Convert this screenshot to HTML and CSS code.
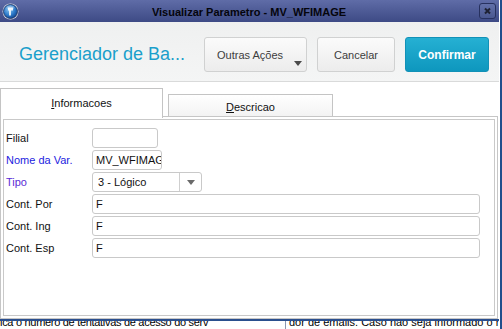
FILE: index.html
```html
<!DOCTYPE html>
<html>
<head>
    <title>Visualizar Parametro - MV_WFIMAGE</title>
    <link rel="stylesheet" href="styles.css">
</head>
<body>
    <div class="screen">
        <div class="dialog">
            <!-- Window title bar -->
            <div class="titlebar">
                <svg class="app-icon" width="17" height="17" viewBox="0 0 17 17">
                    <defs>
                        <radialGradient id="globe" cx="0.4" cy="0.35" r="0.7">
                            <stop offset="0" stop-color="#8cc8f4"/>
                            <stop offset="0.6" stop-color="#2a78c8"/>
                            <stop offset="1" stop-color="#123f86"/>
                        </radialGradient>
                    </defs>
                    <circle cx="8.5" cy="8.5" r="8" fill="#d8dde8"/>
                    <circle cx="8.5" cy="8.5" r="7" fill="url(#globe)" stroke="#1a2f5e" stroke-width="0.8"/>
                    <path d="M6 4.5 h5 v3 h-2 v5 h-2 v-5 h-1 z" fill="#ffffff" opacity="0.85"/>
                    <ellipse cx="8.5" cy="4.5" rx="4" ry="2" fill="#ffffff" opacity="0.25"/>
                </svg>
                <span class="title">Visualizar Parametro - MV_WFIMAGE</span>
                <span class="close">
                    <svg width="17" height="16" viewBox="0 0 17 16">
                        <path d="M6 5.5 L11 10.5 M11 5.5 L6 10.5" stroke="#1e2133" stroke-width="2"/>
                    </svg>
                </span>
            </div>

            <!-- Header with actions -->
            <div class="header">
                <div class="heading">Gerenciador de Ba...</div>
                <div class="actions">
                    <button class="btn btn-menu">Outras Ações<span class="caret"></span></button>
                    <button class="btn btn-cancel">Cancelar</button>
                    <button class="btn btn-primary">Confirmar</button>
                </div>
            </div>

            <!-- Folders -->
            <div class="tabs">
                <div class="tab tab-active"><u>I</u>nformacoes</div>
                <div class="tab tab-idle"><u>D</u>escricao</div>
            </div>

            <div class="panel">
                <div class="panel-inner">
                    <div class="form">
                        <div class="label">Filial</div>
                        <div class="field field-filial"></div>

                        <div class="label label-key">Nome da Var.</div>
                        <div class="field field-var">MV_WFIMAGE</div>

                        <div class="label label-type">Tipo</div>
                        <div class="field field-select">
                            <span class="select-text">3 - Lógico</span>
                            <span class="select-btn"><span class="select-caret"></span></span>
                        </div>

                        <div class="label">Cont. Por</div>
                        <div class="field field-wide">F</div>

                        <div class="label">Cont. Ing</div>
                        <div class="field field-wide">F</div>

                        <div class="label">Cont. Esp</div>
                        <div class="field field-wide">F</div>
                    </div>
                </div>
            </div>

            <!-- Grid of the window behind, cut off -->
            <div class="backdrop">
                <div class="back-cell back-left">ica o número de tentativas de acesso do serv</div>
                <div class="back-cell back-right">dor de emails. Caso não seja informado o n</div>
            </div>
        </div>
        <div class="edge"></div>
    </div>
</body>
</html>
```

FILE: styles.css
```css
body {
    margin: 0;
    background-color: #ffffff;
    font-family: 'Liberation Sans', Arial, sans-serif;
    overflow: hidden;
}

.screen {
    display: flex;
    width: 502px;
    height: 329px;
}

.dialog {
    width: 499px;
    display: flex;
    flex-direction: column;
    background-color: #ffffff;
}

/* Title bar */
.titlebar {
    height: 22px;
    display: flex;
    align-items: center;
    padding: 0 3px 0 2px;
    background: linear-gradient(#5f6ca7, #3d4a85);
}

.app-icon {
    display: block;
}

.title {
    flex: 1;
    text-align: center;
    font-size: 11px;
    font-weight: bold;
    color: #05050c;
    padding-top: 1px;
}

.close {
    width: 15px;
    height: 14px;
    border: 1px solid #27315f;
    border-radius: 3px;
    background: linear-gradient(#6270a9, #4a5890);
    display: flex;
    align-items: center;
    justify-content: center;
    overflow: hidden;
}

.close svg {
    display: block;
    flex: none;
}

/* Header */
.header {
    height: 59px;
    display: flex;
    align-items: flex-start;
    background: linear-gradient(#eff0f0, #f4f5f5);
    border-bottom: 1px solid #d9dada;
}

.heading {
    padding-left: 19px;
    margin-top: 15px;
    line-height: 35px;
    font-size: 18px;
    color: #1a9fcb;
}

.actions {
    margin-left: auto;
    margin-top: 15px;
    padding-right: 10px;
    display: flex;
    gap: 10px;
}

.btn {
    height: 35px;
    box-sizing: border-box;
    border: 1px solid #d0d1d1;
    border-radius: 3px;
    background: linear-gradient(#fbfbfb, #ececec);
    font-family: 'Liberation Sans', Arial, sans-serif;
    font-size: 11px;
    color: #3d3d3d;
    padding: 0;
    margin: 0;
}

.btn-menu {
    width: 103px;
    position: relative;
    text-align: left;
    padding-left: 12px;
}

.caret {
    position: absolute;
    right: 4px;
    bottom: 5px;
    width: 0;
    height: 0;
    border-left: 4px solid transparent;
    border-right: 4px solid transparent;
    border-top: 5px solid #4a4a4a;
}

.btn-cancel {
    width: 78px;
}

.btn-primary {
    width: 84px;
    background: linear-gradient(#25b0d3, #0e97be);
    border-color: #1291b7;
    color: #ffffff;
    font-size: 12px;
    font-weight: bold;
}

/* Tabs */
.tabs {
    margin-top: 6px;
    height: 28px;
    display: flex;
    align-items: flex-end;
    font-size: 11px;
    color: #111111;
}

.tab {
    box-sizing: border-box;
    border: 1px solid #c4c4c4;
    border-bottom: none;
    display: flex;
    align-items: center;
    justify-content: center;
}

.tab-active {
    width: 163px;
    height: 30px;
    margin-bottom: -2px;
    background-color: #ffffff;
    position: relative;
    z-index: 1;
    padding-bottom: 2px;
}

.tab-idle {
    width: 165px;
    height: 22px;
    margin-left: 5px;
    background: linear-gradient(#ffffff, #f3f3f3);
    padding-top: 2px;
}

/* Panel with double border */
.panel {
    width: 498px;
    height: 203px;
    box-sizing: border-box;
    border: 1px solid #c6c6c6;
    padding: 2px;
}

.panel-inner {
    height: 100%;
    box-sizing: border-box;
    border: 1px solid #c9c9c9;
    padding: 8px 0 0 2px;
}

.form {
    display: grid;
    grid-template-columns: 86px 1fr;
    grid-auto-rows: 20px;
    row-gap: 2px;
    font-size: 11px;
}

.label {
    align-self: center;
    color: #111111;
}

.label-key {
    color: #1c1ce0;
}

.label-type {
    color: #5a2cd6;
}

.field {
    height: 20px;
    box-sizing: border-box;
    border: 1px solid #c9c9c9;
    border-radius: 3px;
    background-color: #ffffff;
    padding-left: 3px;
    line-height: 18px;
    color: #111111;
    white-space: nowrap;
    overflow: hidden;
}

.field-filial {
    width: 66px;
}

.field-var {
    width: 70px;
}

.field-select {
    width: 110px;
    display: flex;
    padding-left: 0;
}

.select-text {
    flex: 1;
    padding-left: 5px;
}

.select-btn {
    width: 21px;
    border-left: 1px solid #cfcfcf;
    display: flex;
    align-items: center;
    justify-content: center;
}

.select-caret {
    width: 0;
    height: 0;
    border-left: 4px solid transparent;
    border-right: 4px solid transparent;
    border-top: 5px solid #6a6a6a;
}

.field-wide {
    width: 388px;
}

/* Window behind the dialog */
.backdrop {
    flex: 1;
    display: flex;
    border-top: 2px solid #2a4f8e;
    overflow: hidden;
    font-size: 11px;
    line-height: 11px;
    color: #000000;
}

.back-cell {
    white-space: nowrap;
    overflow: hidden;
    margin-top: -4px;
}

.back-left {
    width: 285px;
    border-right: 1px solid #8a97b0;
    letter-spacing: -0.3px;
}

.back-right {
    flex: 1;
    padding-left: 3px;
}

.edge {
    width: 3px;
    background: linear-gradient(to right, #ffffff 0 1px, #204e8c 1px 3px);
}
```
